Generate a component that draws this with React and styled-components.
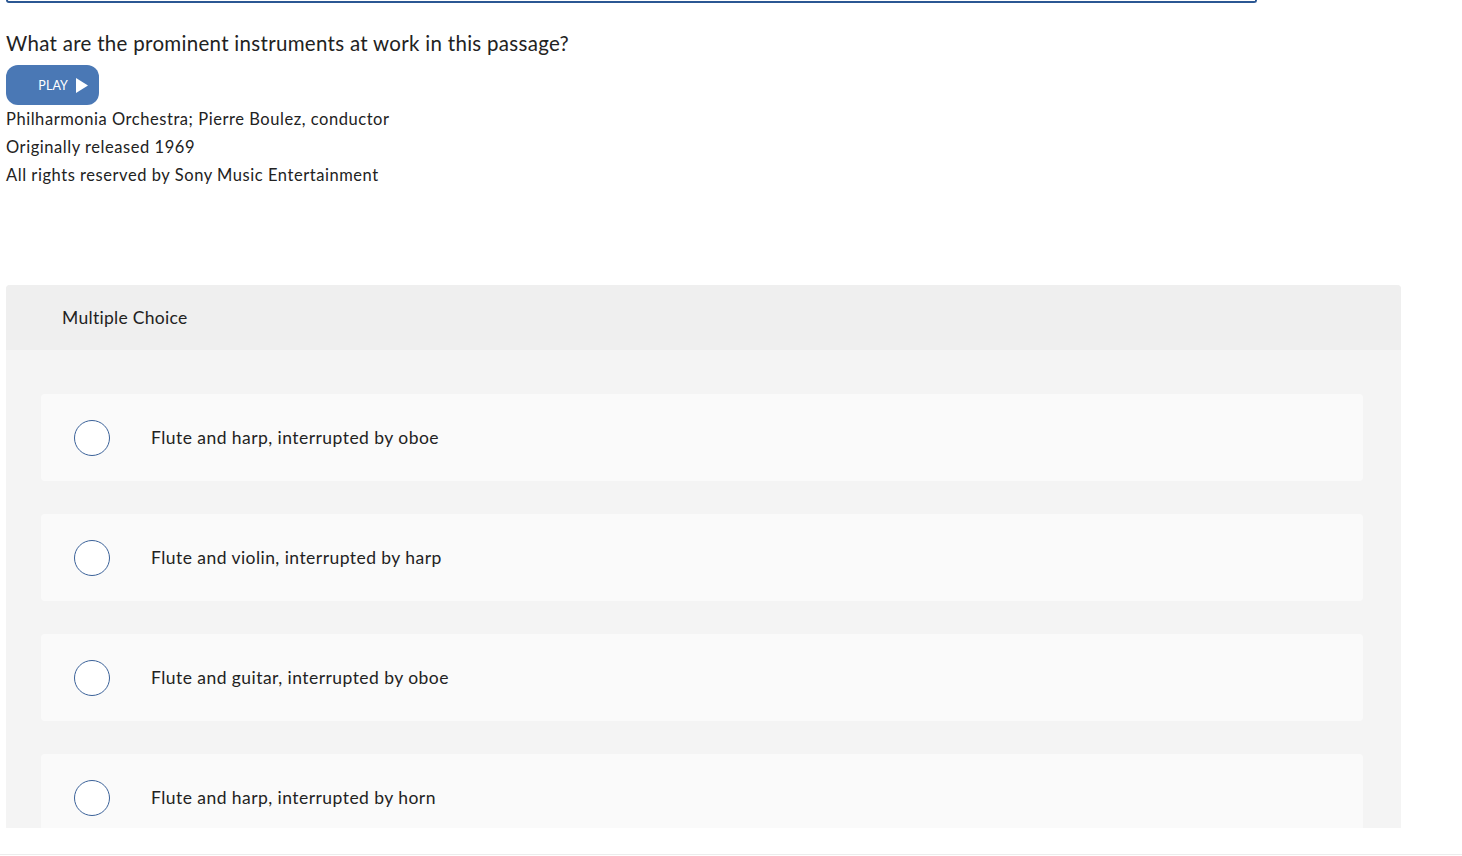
import React from 'react';
import styled, { createGlobalStyle } from 'styled-components';

const GlobalStyle = createGlobalStyle`
  html, body {
    margin: 0;
    padding: 0;
    background: #ffffff;
    font-family: Lato, "Open Sans", "Liberation Sans", sans-serif;
    color: #222222;
  }
  * {
    box-sizing: border-box;
  }
`;

const Page = styled.div`
  width: 1462px;
  height: 856px;
  display: flex;
  flex-direction: column;
  overflow: hidden;
`;

const Main = styled.main`
  height: 828px;
  overflow: hidden;
  padding: 0 6px;
`;

const PrevFrame = styled.div`
  width: 1251px;
  height: 3px;
  border: 2px solid #2b5793;
  border-top: none;
  border-radius: 0 0 6px 6px;
`;

const Question = styled.h2`
  margin: 28px 0 0;
  font-size: 20.5px;
  line-height: 24px;
  letter-spacing: 0.3px;
  font-weight: 400;
  color: #222222;
`;

const PlayButton = styled.button`
  margin-top: 10px;
  width: 93px;
  height: 40px;
  border: none;
  border-radius: 12px;
  background: #4a78b5;
  color: #ffffff;
  display: flex;
  align-items: center;
  justify-content: flex-end;
  gap: 8px;
  padding: 0 11px 0 0;
  font-family: inherit;
  font-size: 12.5px;
  letter-spacing: 0.1px;
  cursor: pointer;
`;

const Meta = styled.div`
  display: flex;
  flex-direction: column;
`;

const MetaLine = styled.div`
  font-size: 16.5px;
  line-height: 28px;
  letter-spacing: 0.55px;
  color: #222222;
`;

const Panel = styled.section`
  margin-top: 96px;
  width: 1395px;
  border-radius: 4px 4px 0 0;
  background: #f4f4f4;
  overflow: hidden;
`;

const PanelHeader = styled.div`
  height: 65px;
  display: flex;
  align-items: center;
  padding-left: 56px;
  background: #efefef;
  font-size: 17.5px;
  letter-spacing: 0.3px;
  color: #222222;
`;

const Choices = styled.div`
  display: flex;
  flex-direction: column;
  gap: 33px;
  padding: 44px 38px 40px 35px;
`;

const Choice = styled.label`
  height: 87px;
  display: flex;
  align-items: center;
  padding-left: 33px;
  gap: 41px;
  background: #fafafa;
  border-radius: 4px;
  font-size: 17.5px;
  letter-spacing: 0.45px;
  color: #222222;
  cursor: pointer;
`;

const Radio = styled.span`
  width: 36px;
  height: 36px;
  flex: none;
  border-radius: 50%;
  border: 1.5px solid #3b6299;
  background: #ffffff;
`;

const Footer = styled.footer`
  margin-top: 26px;
  height: 2px;
  border-top: 1px solid #ececec;
`;

const choices = [
  'Flute and harp, interrupted by oboe',
  'Flute and violin, interrupted by harp',
  'Flute and guitar, interrupted by oboe',
  'Flute and harp, interrupted by horn',
];

export default function App() {
  return (
    <Page>
      <GlobalStyle />
      <Main>
        <PrevFrame />
        <Question>What are the prominent instruments at work in this passage?</Question>
        <PlayButton>
          PLAY
          <svg width="12" height="15" viewBox="0 0 12 15">
            <path d="M0 0 L12 7.5 L0 15 Z" fill="#ffffff" />
          </svg>
        </PlayButton>
        <Meta>
          <MetaLine>Philharmonia Orchestra; Pierre Boulez, conductor</MetaLine>
          <MetaLine>Originally released 1969</MetaLine>
          <MetaLine>All rights reserved by Sony Music Entertainment</MetaLine>
        </Meta>
        <Panel>
          <PanelHeader>Multiple Choice</PanelHeader>
          <Choices>
            {choices.map((c) => (
              <Choice key={c}>
                <Radio />
                {c}
              </Choice>
            ))}
          </Choices>
        </Panel>
      </Main>
      <Footer />
    </Page>
  );
}
